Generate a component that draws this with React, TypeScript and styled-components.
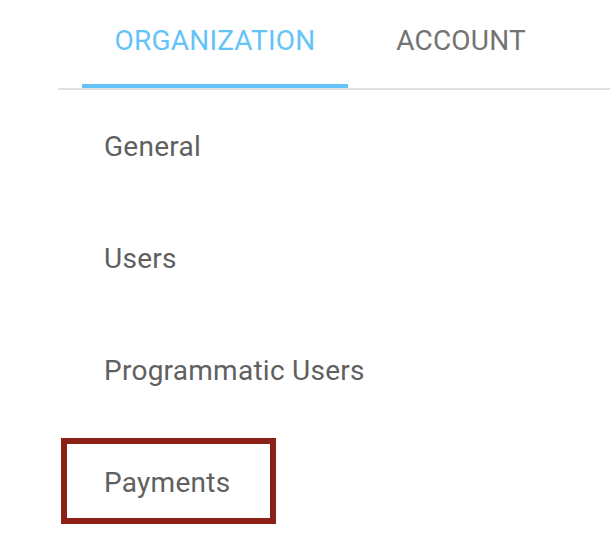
import styled, { createGlobalStyle } from "styled-components";

const GlobalStyle = createGlobalStyle`
  html, body {
    margin: 0;
    padding: 0;
    background: #fff;
    font-family: Roboto, "Liberation Sans", sans-serif;
  }
`;

const Root = styled.div`
  width: 610px;
  height: 548px;
  overflow: hidden;
  padding-left: 58px;
  box-sizing: border-box;
`;

const TabBar = styled.div`
  display: flex;
  height: 88px;
  padding-left: 24px;
  border-bottom: 2px solid #e0e0e0;
`;

const Tab = styled.div<{ $active?: boolean; $width: number }>`
  width: ${(p) => p.$width}px;
  display: flex;
  align-items: center;
  justify-content: center;
  box-sizing: border-box;
  padding-bottom: 4px;
  font-size: 28px;
  font-weight: 400;
  letter-spacing: 0.2px;
  text-transform: uppercase;
  color: ${(p) => (p.$active ? "#64c3f8" : "#737373")};
  border-bottom: 4px solid ${(p) => (p.$active ? "#64c3f8" : "transparent")};
`;

const List = styled.div`
  display: flex;
  flex-direction: column;
`;

const Item = styled.div`
  position: relative;
  height: 112px;
  display: flex;
  align-items: center;
  padding-left: 46px;
  font-size: 28px;
  letter-spacing: 0.26px;
  color: #606060;
`;

const Highlight = styled.div`
  position: absolute;
  left: 3px;
  top: 12px;
  width: 215px;
  height: 86px;
  box-sizing: border-box;
  border: 6px solid #8b2116;
  pointer-events: none;
`;

const items = ["General", "Users", "Programmatic Users", "Payments"];

const App = () => {
  return (
    <Root>
      <GlobalStyle />
      <TabBar>
        <Tab $active $width={266}>
          Organization
        </Tab>
        <Tab $width={226}>Account</Tab>
      </TabBar>
      <List>
        {items.map((label) => (
          <Item key={label}>
            {label}
            {label === "Payments" && <Highlight />}
          </Item>
        ))}
      </List>
    </Root>
  );
};

export default App;
